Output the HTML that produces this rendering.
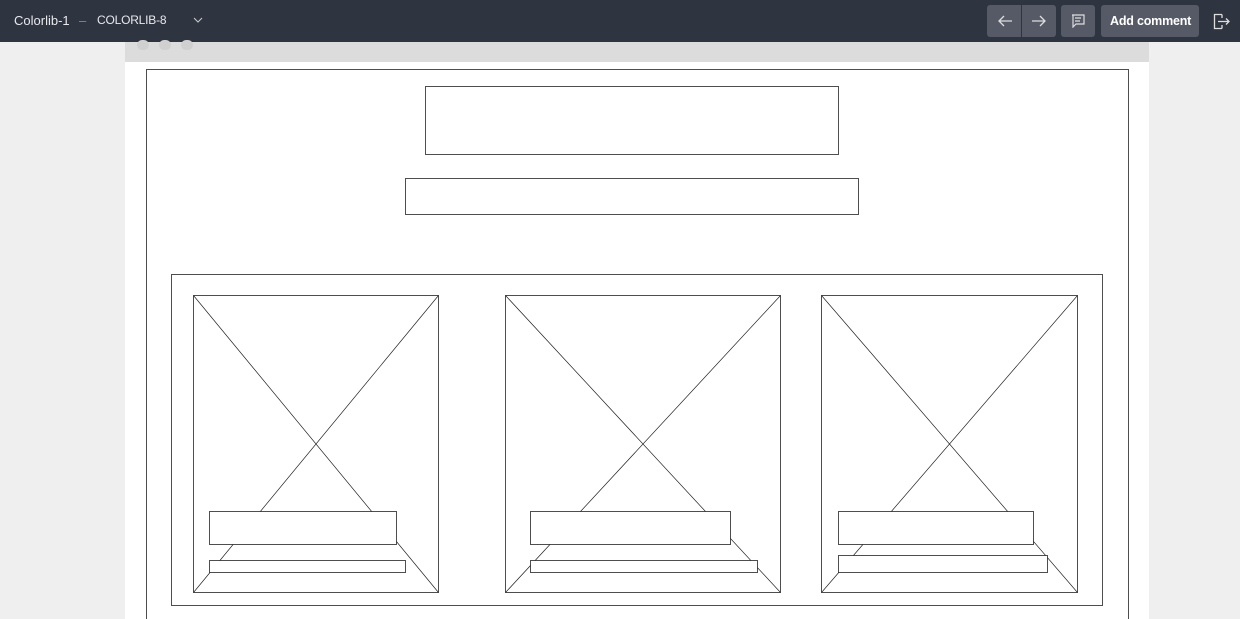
<!DOCTYPE html><html><head><style>
body{margin:0;width:1240px;height:619px;overflow:hidden;background:#efefef;font-family:"Liberation Sans",sans-serif;position:relative}
.top{position:absolute;left:0;top:0;width:1240px;height:42px;background:#2f3441;color:#e6e8ec;font-size:13px}
.btn{position:absolute;top:5px;height:32px;background:#555a66;border-radius:3px}
</style></head><body>
<div class="top">
<span style="position:absolute;left:14px;top:13px">Colorlib-1</span>
<span style="position:absolute;left:79px;top:13px;color:#888">–</span>
<span style="position:absolute;left:97px;top:13px;font-size:12px;letter-spacing:-0.2px">COLORLIB-8</span>
<svg style="position:absolute;left:193px;top:16px" width="10" height="8"><path d="M1 2l4 4 4-4" stroke="#ccc" fill="none"/></svg>
<div class="btn" style="left:987px;width:69px"></div>
<div style="position:absolute;left:1021px;top:5px;width:1px;height:32px;background:#2f3441"></div>
<svg style="position:absolute;left:997px;top:14px" width="16" height="14"><path d="M15 7H2M7 2L2 7l5 5" stroke="#ddd" fill="none" stroke-width="1.3"/></svg>
<svg style="position:absolute;left:1031px;top:14px" width="16" height="14"><path d="M1 7h13M9 2l5 5-5 5" stroke="#ddd" fill="none" stroke-width="1.3"/></svg>
<div class="btn" style="left:1061px;width:34px"></div>
<svg style="position:absolute;left:1071px;top:14px" width="14" height="14"><path d="M1 1h12v9H5l-3 3V1zM4 4h6M4 7h5" stroke="#ddd" fill="none" stroke-width="1.2"/></svg>
<div class="btn" style="left:1101px;width:98px"></div>
<span style="position:absolute;left:1110px;top:14px;font-weight:bold;color:#fff;font-size:12.5px;letter-spacing:-0.2px">Add comment</span>
<svg style="position:absolute;left:1213px;top:13px" width="18" height="18"><path d="M9 1.5H1.5v14H9M9 15.5V12M9 1.5V5M5 8.5h11M13 5.5l3 3-3 3" stroke="#ddd" fill="none" stroke-width="1.3"/></svg>
</div>
<div style="position:absolute;left:125px;top:42px;width:1024px;height:577px;background:#fff"></div>
<div style="position:absolute;left:125px;top:42px;width:1024px;height:20px;background:#dcdcdc"></div>
<div style="position:absolute;left:137px;top:40px;width:12px;height:10px;border-radius:6px;background:#d0d0d0"></div>
<div style="position:absolute;left:159px;top:40px;width:12px;height:10px;border-radius:6px;background:#d0d0d0"></div>
<div style="position:absolute;left:181px;top:40px;width:12px;height:10px;border-radius:6px;background:#d0d0d0"></div>
<svg style="position:absolute;left:0;top:0" width="1240" height="619" fill="none" stroke="#222" stroke-width="0.8">
<rect x="146.5" y="69.5" width="982" height="560"/>
<rect x="425.5" y="86.5" width="413" height="68"/>
<rect x="405.5" y="178.5" width="453" height="36"/>
<rect x="171.5" y="274.5" width="931" height="331"/>
<g stroke-width="0.7">
<path d="M193.5 295.5L438.5 592.5M438.5 295.5L193.5 592.5"/>
<path d="M505.5 295.5L780.5 592.5M780.5 295.5L505.5 592.5"/>
<path d="M821.5 295.5L1077.5 592.5M1077.5 295.5L821.5 592.5"/>
</g>
<rect x="193.5" y="295.5" width="245" height="297"/>
<rect x="505.5" y="295.5" width="275" height="297"/>
<rect x="821.5" y="295.5" width="256" height="297"/>
<g fill="#fff">
<rect x="209.5" y="511.5" width="187" height="33"/>
<rect x="209.5" y="560.5" width="196" height="12"/>
<rect x="530.5" y="511.5" width="200" height="33"/>
<rect x="530.5" y="560.5" width="227" height="12"/>
<rect x="838.5" y="511.5" width="195" height="33"/>
<rect x="838.5" y="555.5" width="209" height="17"/>
</g>
</svg>
</body></html>
